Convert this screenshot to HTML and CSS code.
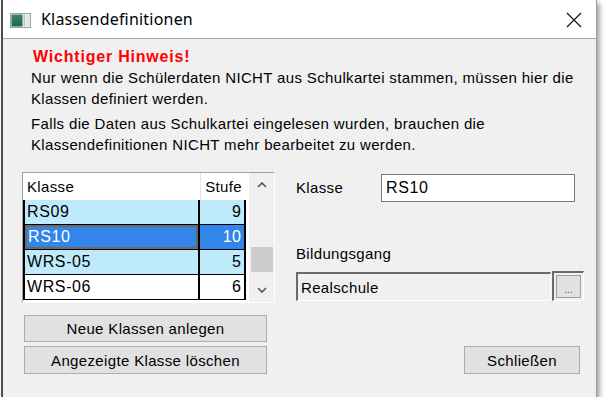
FILE: index.html
```html
<!DOCTYPE html>
<html lang="de">
<head>
<meta charset="utf-8">
<title>Klassendefinitionen</title>
<link rel="stylesheet" href="styles.css">
</head>
<body>
<div class="window">
  <div class="titlebar">
    <svg class="app-icon" width="21" height="15" viewBox="0 0 21 15">
      <defs>
        <linearGradient id="g1" x1="0" y1="0" x2="0" y2="1">
          <stop offset="0" stop-color="#3b7f86"/>
          <stop offset="1" stop-color="#1f6a3a"/>
        </linearGradient>
      </defs>
      <rect x="0.5" y="0.5" width="20" height="14" fill="#f2f4f4" stroke="#9aa3a6"/>
      <rect x="1.5" y="1.5" width="11" height="12" fill="url(#g1)"/>
      <rect x="13.5" y="1.5" width="1.5" height="12" fill="#b8c0c2"/>
      <rect x="16" y="1.5" width="3.5" height="12" fill="#dfe6e6"/>
    </svg>
    <span class="title">Klassendefinitionen</span>
    <svg class="close-x" width="16" height="16" viewBox="0 0 16 16">
      <path d="M1 1 L15 15 M15 1 L1 15" stroke="#1a1a1a" stroke-width="1.3" fill="none"/>
    </svg>
  </div>
  <div class="client">
    <div class="notice">
      <p class="warn">Wichtiger Hinweis!</p>
      <p>Nur wenn die Schülerdaten NICHT aus Schulkartei stammen, müssen hier die<br>Klassen definiert werden.</p>
      <p>Falls die Daten aus Schulkartei eingelesen wurden, brauchen die<br>Klassendefinitionen NICHT mehr bearbeitet zu werden.</p>
    </div>
    <div class="main">
      <div class="left">
        <div class="gridframe">
          <div class="grid">
            <div class="hcell">Klasse</div>
            <div class="hcell num hsep">Stufe</div>
            <div class="cell first alt">RS09</div>
            <div class="cell num alt">9</div>
            <div class="cell first sel"><span class="focus">RS10</span></div>
            <div class="cell num sel">10</div>
            <div class="cell first alt">WRS-05</div>
            <div class="cell num alt">5</div>
            <div class="cell first">WRS-06</div>
            <div class="cell num">6</div>
          </div>
          <div class="scrollbar">
            <div class="sbtn">
              <svg width="10" height="6" viewBox="0 0 10 6"><path d="M1 5 L5 1 L9 5" stroke="#555" stroke-width="1.6" fill="none"/></svg>
            </div>
            <div class="track"><div class="thumb"></div></div>
            <div class="sbtn">
              <svg width="10" height="6" viewBox="0 0 10 6"><path d="M1 1 L5 5 L9 1" stroke="#555" stroke-width="1.6" fill="none"/></svg>
            </div>
          </div>
        </div>
        <button class="btn wide first-btn">Neue Klassen anlegen</button>
        <button class="btn wide second-btn">Angezeigte Klasse löschen</button>
      </div>
      <div class="right">
        <div class="field-row">
          <span class="lbl klasse-lbl">Klasse</span>
          <div class="textbox">RS10</div>
        </div>
        <span class="lbl bg-lbl">Bildungsgang</span>
        <div class="combo-row">
          <div class="readonly">Realschule</div>
          <div class="dots-wrap"><button class="dots">...</button></div>
        </div>
        <button class="btn close-btn">Schließen</button>
      </div>
    </div>
  </div>
</div>
</body>
</html>
```
FILE: styles.css
```css
html, body {
  margin: 0;
  padding: 0;
  background: #ffffff;
}
body {
  font-family: "Liberation Sans", Arial, sans-serif;
  font-size: 15px;
  letter-spacing: 0.35px;
  color: #000;
}
.window {
  width: 596px;
  height: 397px;
  margin-left: 1px;
  border-left: 2px solid #4e4e4e;
  border-right: 1px solid #9c9c9c;
  box-shadow: 3px 3px 5px rgba(0,0,0,0.35);
  background: #f0f0f0;
  display: flex;
  flex-direction: column;
  box-sizing: border-box;
}
.titlebar {
  height: 38px;
  flex: 0 0 38px;
  background: #ffffff;
  border-bottom: 1px solid #a6a6a6;
  display: flex;
  align-items: center;
  padding-left: 7px;
  box-sizing: content-box;
}
.app-icon {
  margin-top: 2px;
}
.title {
  font-family: "Noto Sans", "Open Sans", sans-serif;
  font-size: 16px;
  letter-spacing: 0.2px;
  margin-left: 10px;
  color: #000;
  flex: 1;
}
.close-x {
  margin-right: 14px;
  margin-top: 1px;
}
.client {
  flex: 1;
  display: flex;
  flex-direction: column;
}
.notice {
  padding: 7px 0 0 28px;
  line-height: 21px;
}
.notice p {
  margin: 0 0 4px 0;
}
.notice .warn {
  color: #ff0000;
  font-weight: bold;
  font-size: 16px;
  letter-spacing: 0.8px;
  margin: 0 0 0 2px;
}
.main {
  display: flex;
  padding-left: 19px;
  margin-top: 13px;
}
.left {
  width: 253px;
  display: flex;
  flex-direction: column;
}
.gridframe {
  width: 253px;
  height: 131px;
  box-sizing: border-box;
  border-top: 1px solid #a0a0a0;
  border-left: 1px solid #a0a0a0;
  border-right: 1px solid #ffffff;
  border-bottom: 1px solid #ffffff;
  background: #ffffff;
  display: flex;
}
.grid {
  width: 225px;
  display: grid;
  grid-template-columns: 177px 46px;
  grid-template-rows: 27px 25px 25px 25px 25px;
  align-content: start;
}
.hcell {
  display: flex;
  align-items: center;
  padding-left: 4px;
  background: #fff;
}
.hcell.num {
  justify-content: flex-end;
  padding-right: 4px;
}
.hsep {
  border-left: 1px solid #e3e3e3;
}
.cell {
  display: flex;
  align-items: center;
  padding-left: 3px;
  background: #fff;
  border-right: 2px solid #000;
  border-bottom: 1px solid #000;
  box-sizing: border-box;
  font-size: 16px;
  letter-spacing: 0.6px;
}
.cell.first {
  border-left: 2px solid #000;
  padding-left: 2px;
}
.cell.num {
  justify-content: flex-end;
  padding-right: 3px;
  letter-spacing: 0.2px;
}
.cell.alt {
  background: #bfeafc;
}
.cell.sel {
  background: #3385e8;
  color: #ffffff;
}
.cell.first.sel {
  padding: 0;
}
.focus {
  flex: 1;
  align-self: stretch;
  display: flex;
  align-items: center;
  border: 2px solid #6a6a6a;
  padding-left: 1px;
}
.scrollbar {
  margin-left: 2px;
  width: 25px;
  background: #f0f0f0;
  display: flex;
  flex-direction: column;
}
.sbtn {
  height: 24px;
  display: flex;
  align-items: center;
  justify-content: center;
}
.track {
  flex: 1;
}
.thumb {
  margin: 50px 1px 0 2px;
  height: 25px;
  background: #cdcdcd;
}
.btn {
  font-family: "Liberation Sans", Arial, sans-serif;
  font-size: 15px;
  letter-spacing: 0.35px;
  color: #000;
  background: #e1e1e1;
  border: 1px solid #adadad;
  padding: 0;
  margin: 0;
}
.wide {
  width: 243px;
  margin-left: 2px;
}
.first-btn {
  height: 27px;
  margin-top: 12px;
}
.second-btn {
  height: 28px;
  margin-top: 4px;
}
.right {
  margin-left: 21px;
  width: 288px;
  display: flex;
  flex-direction: column;
  align-items: flex-start;
}
.field-row {
  display: flex;
  margin-top: 2px;
}
.lbl {
  line-height: 17px;
}
.klasse-lbl {
  width: 85px;
  margin-top: 5px;
}
.textbox {
  width: 194px;
  height: 28px;
  box-sizing: border-box;
  border: 1px solid #7a7a7a;
  background: #fff;
  padding-left: 4px;
  display: flex;
  align-items: center;
  font-size: 16px;
  letter-spacing: 0.6px;
}
.bg-lbl {
  margin-top: 43px;
}
.combo-row {
  display: flex;
  margin-top: 10px;
}
.readonly {
  width: 255px;
  height: 29px;
  box-sizing: border-box;
  border-top: 2px solid #6a6a6a;
  border-left: 2px solid #6a6a6a;
  border-right: 1px solid #ffffff;
  border-bottom: 1px solid #ffffff;
  background: #f0f0f0;
  padding-left: 3px;
  display: flex;
  align-items: center;
}
.dots-wrap {
  margin-left: 1px;
  margin-top: -1px;
  width: 32px;
  height: 30px;
  box-sizing: border-box;
  border-top: 2px solid #6a6a6a;
  border-left: 2px solid #6a6a6a;
  border-right: 1px solid #ffffff;
  border-bottom: 1px solid #ffffff;
  padding: 2px;
}
.dots {
  width: 100%;
  height: 100%;
  box-sizing: border-box;
  border: 1px solid #9e9e9e;
  background: #e1e1e1;
  font-family: "Liberation Sans", Arial, sans-serif;
  font-size: 10px;
  letter-spacing: 0;
  color: #5a4a5a;
  padding: 6px 0 0;
  margin: 0;
  line-height: 10px;
}
.close-btn {
  width: 116px;
  height: 28px;
  margin-top: 45px;
  margin-left: 168px;
}
```
